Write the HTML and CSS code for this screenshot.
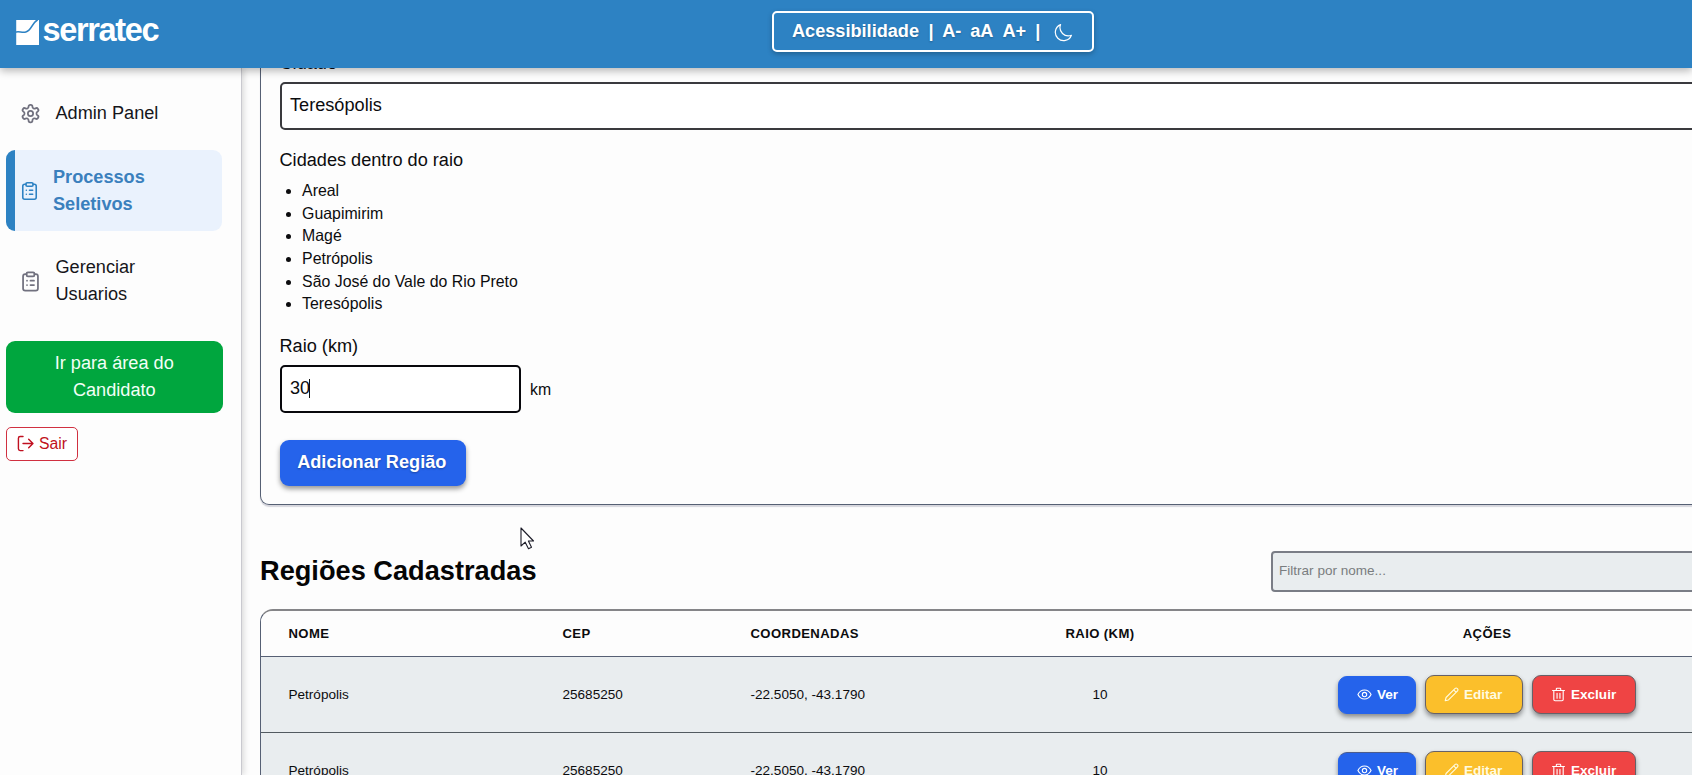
FILE: index.html
```html
<!DOCTYPE html>
<html lang="pt-BR">
<head>
<meta charset="utf-8">
<title>Serratec</title>
<link rel="stylesheet" href="styles.css">
</head>
<body>
<svg class="sprite" aria-hidden="true">
  <symbol id="clipboard" viewBox="0 0 24 24"><rect x="7.500" y="1.500" width="9" height="4.500" rx="1.500"/><path d="M16.500 3.500H18a2.500 2.500 0 0 1 2.500 2.500v14a2.500 2.500 0 0 1-2.500 2.500H6A2.500 2.500 0 0 1 3.500 20V6A2.500 2.500 0 0 1 6 3.500h1.500M12 11h4M12 16h4M8 11h.01M8 16h.01"/></symbol>
  <symbol id="eye" viewBox="0 0 24 24"><path d="M1.500 12S5 4.800 12 4.800 22.500 12 22.500 12 19 19.200 12 19.200 1.500 12 1.500 12z"/><circle cx="12" cy="12" r="3.500"/></symbol>
  <symbol id="pencil" viewBox="0 0 24 24"><path d="M2 22l1.300-5.200L17.500 2.600a2.700 2.700 0 0 1 3.900 3.900L7.200 20.700 2 22zM15.500 4.600l3.900 3.900"/></symbol>
  <symbol id="trash" viewBox="0 0 24 24"><path d="M2.500 5.500h19M8.500 5.500V3a1 1 0 0 1 1-1h5a1 1 0 0 1 1 1v2.500M4.500 5.500V20a2 2 0 0 0 2 2h11a2 2 0 0 0 2-2V5.500M9.700 10v8M14.300 10v8"/></symbol>
</svg>

<header class="topbar">
  <div class="logo">
    <svg class="logo-mark" viewBox="0 0 24 26"><path d="M0 0h24v26H0z" fill="#fff" stroke="none"/><path d="M0 12.500C3 11.500 6 13.500 10 12.500 16 11 16.500 3 22 0" fill="none" stroke="#2d82c3" stroke-width="1.700"/></svg>
    <span class="logo-name">serratec</span>
  </div>
  <div class="a11y">
    <span>Acessibilidade</span><span class="bar">|</span><span class="minus">A-</span><span class="reset">aA</span><span class="plus">A+</span><span class="bar last">|</span>
    <svg class="moon" viewBox="0 0 24 24"><path d="M22 15.500A10.500 10.500 0 0 1 8.300 2 10.500 10.500 0 1 0 22 15.500z"/></svg>
  </div>
</header>

<div class="layout">
  <aside class="sidebar">
    <a class="nav admin">
      <svg class="icon gear" viewBox="0 0 24 24"><path d="M12.220 2h-.44a2 2 0 0 0-2 2v.18a2 2 0 0 1-1 1.730l-.43.25a2 2 0 0 1-2 0l-.15-.08a2 2 0 0 0-2.730.73l-.22.38a2 2 0 0 0 .73 2.730l.15.1a2 2 0 0 1 1 1.720v.51a2 2 0 0 1-1 1.740l-.15.09a2 2 0 0 0-.73 2.730l.22.38a2 2 0 0 0 2.730.73l.15-.08a2 2 0 0 1 2 0l.43.25a2 2 0 0 1 1 1.730V20a2 2 0 0 0 2 2h.44a2 2 0 0 0 2-2v-.18a2 2 0 0 1 1-1.730l.43-.25a2 2 0 0 1 2 0l.15.08a2 2 0 0 0 2.730-.73l.22-.39a2 2 0 0 0-.73-2.730l-.15-.08a2 2 0 0 1-1-1.740v-.5a2 2 0 0 1 1-1.740l.15-.09a2 2 0 0 0 .73-2.730l-.22-.38a2 2 0 0 0-2.730-.73l-.15.08a2 2 0 0 1-2 0l-.43-.25a2 2 0 0 1-1-1.730V4a2 2 0 0 0-2-2z"/><circle cx="12" cy="12" r="3"/></svg>
      <span>Admin Panel</span>
    </a>
    <a class="nav active">
      <svg class="icon"><use href="#clipboard"/></svg>
      <span>Processos<br>Seletivos</span>
    </a>
    <a class="nav users">
      <svg class="icon"><use href="#clipboard"/></svg>
      <span>Gerenciar<br>Usuarios</span>
    </a>
    <button class="candidate">Ir para área do<br>Candidato</button>
    <button class="logout">
      <svg viewBox="0 0 24 24"><path d="M8.500 22H4.500A2.500 2.500 0 0 1 2 19.500v-15A2.500 2.500 0 0 1 4.500 2H8.500M8.500 12H22M16.500 6l6 6-6 6"/></svg>
      <span>Sair</span>
    </button>
  </aside>

  <main class="content">
    <section class="card">
      <label class="label city-label">Cidade</label>
      <div class="field city">Teresópolis</div>
      <p class="label radius-cities">Cidades dentro do raio</p>
      <ul class="cities">
        <li>Areal</li><li>Guapimirim</li><li>Magé</li><li>Petrópolis</li><li>São José do Vale do Rio Preto</li><li>Teresópolis</li>
      </ul>
      <label class="label radius-label">Raio (km)</label>
      <div class="radius-row"><div class="field radius">30<i class="caret"></i></div><span>km</span></div>
      <button class="add">Adicionar Região</button>
    </section>

    <div class="section-head">
      <h2>Regiões Cadastradas</h2>
      <div class="filter">Filtrar por nome...</div>
    </div>

    <div class="table">
      <div class="row head"><span>NOME</span><span>CEP</span><span>COORDENADAS</span><span class="center">RAIO (KM)</span><span class="center">AÇÕES</span></div>
      <div class="row">
        <span>Petrópolis</span><span>25685250</span><span>-22.5050, -43.1790</span><span class="center">10</span>
        <div class="actions">
          <button class="btn view"><svg><use href="#eye"/></svg>Ver</button>
          <button class="btn edit"><svg><use href="#pencil"/></svg>Editar</button>
          <button class="btn delete"><svg><use href="#trash"/></svg>Excluir</button>
        </div>
      </div>
      <div class="row">
        <span>Petrópolis</span><span>25685250</span><span>-22.5050, -43.1790</span><span class="center">10</span>
        <div class="actions">
          <button class="btn view second"><svg><use href="#eye"/></svg>Ver</button>
          <button class="btn edit"><svg><use href="#pencil"/></svg>Editar</button>
          <button class="btn delete"><svg><use href="#trash"/></svg>Excluir</button>
        </div>
      </div>
    </div>
  </main>
</div>

<svg class="cursor" viewBox="0 0 15 23"><path d="M1 1v18l4.200-3.800 3.300 6.500 3-1.400-3.100-6.300H13.500z" fill="#fff" stroke="#1c1c28" stroke-width="1.100"/></svg>
</body>
</html>
```

FILE: styles.css
```css
* { box-sizing: border-box; }

body {
  margin: 0;
  height: 775px;
  overflow: hidden;
  background: #fdfdfd;
  color: #0c0c0e;
  font: 18.15px/27px "Liberation Sans", Arial, sans-serif;
}

button { font: inherit; margin: 0; border: 0; }
svg { fill: none; stroke: currentColor; stroke-width: 2; stroke-linecap: round; stroke-linejoin: round; flex: none; }
.sprite { display: none; }

.topbar {
  position: relative;
  z-index: 2;
  height: 68px;
  background: #2d82c3;
  box-shadow: 0 3px 8px rgba(0, 0, 0, .28);
  color: #fff;
  display: flex;
  align-items: flex-start;
}
.logo { display: flex; align-items: flex-start; width: 772px; padding: 12px 0 0 15.500px; }
.logo-mark { width: 23.500px; height: 25px; margin-top: 8px; }
.logo-name { font-size: 32.500px; line-height: 36px; font-weight: bold; letter-spacing: -1.350px; margin-left: 3.500px; }

.a11y {
  display: flex;
  align-items: center;
  width: 322px;
  height: 41px;
  margin-top: 11px;
  padding-left: 18px;
  border: 2px solid #fff;
  border-radius: 5px;
  box-shadow: 0 2px 5px rgba(0, 0, 0, .25);
  font-weight: bold;
  text-shadow: 0 1px 2px rgba(0, 0, 0, .25);
}
.bar { margin-left: 9.500px; }
.last { margin-left: 9px; }
.minus { margin-left: 8.500px; }
.reset, .plus { margin-left: 9px; }
.moon { width: 19px; height: 19px; margin-left: 14px; margin-top: 2px; stroke-width: 1.500; }

.layout { display: flex; height: 707px; }

.sidebar {
  flex: none;
  width: 242px;
  height: 707px;
  padding: 32px 19px 0 6px;
  border-right: 1px solid #c9c9cf;
  box-shadow: 2px 0 6px rgba(0, 0, 0, .14);
}
.nav { display: flex; align-items: center; color: #16161a; }
.icon { width: 21px; height: 21px; color: #71717f; }
.admin { padding-left: 14px; }
.admin span { margin-left: 14.500px; }
.active {
  height: 81px;
  margin-top: 23px;
  padding-left: 4.500px;
  border-left: 9px solid #2d82c3;
  border-radius: 9px;
  background: #eaf2fd;
  color: #3a80bd;
  font-weight: bold;
}
.active .icon { width: 19px; height: 20px; color: #2d82c3; }
.active span { margin-left: 14.500px; }
.users { margin-top: 23px; padding-left: 14px; }
.users span { margin-left: 14.500px; }
.candidate {
  display: block;
  width: 216.500px;
  height: 72px;
  margin-top: 32.500px;
  padding: 0;
  border-radius: 9px;
  background: #00a63e;
  color: #f3fff7;
}
.logout {
  display: flex;
  align-items: center;
  width: 71.500px;
  height: 34px;
  margin-top: 14px;
  padding: 0 0 0 10px;
  border: 1px solid #d03040;
  border-radius: 5px;
  background: #fff;
  color: #c01020;
  font-size: 15.800px;
}
.logout svg { width: 17px; height: 17px; }
.logout span { margin-left: 5px; }

.content { flex: none; width: 1461px; margin-top: -20px; padding-left: 18px; }
.card {
  width: 1500px;
  height: 457px;
  padding: 3px 18.500px 0;
  border: 1.500px solid #566074;
  border-top: 0;
  border-radius: 0 0 9px 9px;
  box-shadow: 0 2px 1px rgba(40, 40, 80, .18);
}
.label { display: block; margin: 0; }
.city-label { height: 31px; margin-top: -1px; padding-top: 0; margin-bottom: 1px; }
.field { height: 48px; border: 2px solid #3a3a3e; border-radius: 5px; background: #fff; padding-left: 8.500px; display: flex; align-items: center; }
.city { padding-bottom: 2px; }
.radius-cities { margin-top: 17px; }
.cities { margin: 6px 0 0; padding-left: 22.600px; font-size: 15.870px; line-height: 22.680px; list-style: disc; }
.radius-label { margin-top: 17px; }
.radius-row { display: flex; align-items: center; margin-top: 5px; font-size: 15.800px; }
.radius-row > span { margin-left: 9px; }
.radius { width: 241.500px; height: 48px; border: 2px solid #08080c; padding-left: 8.500px; padding-bottom: 1px; font-size: 18.100px; }
.caret { width: 1px; height: 19px; background: #111; margin-left: -1px; }
.add {
  width: 186.500px;
  height: 46px;
  margin-top: 27px;
  padding: 0 2px 1px 0;
  border-radius: 9px;
  background: #2563eb;
  box-shadow: 0 3px 5px rgba(0, 0, 0, .4);
  color: #fff;
  font-weight: bold;
  text-shadow: 0 1px 2px rgba(0, 0, 0, .3);
}

.section-head { display: flex; align-items: flex-start; justify-content: space-between; margin-top: 46px; }
h2 { margin: 2px 0 0; font-size: 27.200px; line-height: 36px; color: #050505; }
.filter { width: 432px; height: 41px; padding-left: 6px; border: 2px solid #7a7d86; border-radius: 4px; background: #e9edef; color: #7a7d80; font-size: 13.560px; line-height: 35px; }

.table { height: 240px; margin-top: 17px; border: 1.500px solid #566074; border-top: 2px solid #858588; border-radius: 13px 13px 0 0; overflow: hidden; font-size: 13.560px; }
.row {
  display: grid;
  grid-template-columns: 274px 188px 206px 342px 432px;
  align-items: center;
  height: 76px;
  border-bottom: 1px solid #525a60;
  background: #e9edef;
}
.row > span { padding-left: 27.500px; }
.row > .center { padding: 0; text-align: center; }
.row.head { height: 46px; padding-bottom: 1px; background: #fdfdfd; border-bottom-color: #566074; font-weight: bold; font-size: 13.100px; letter-spacing: .4px; }
.actions { display: flex; justify-content: center; align-items: center; gap: 9px; }
.btn {
  display: flex;
  align-items: center;
  height: 39px;
  padding: 0 0 0 18px;
  border: 1.500px solid #666168;
  border-radius: 9px;
  box-shadow: 0 3px 5px rgba(0, 0, 0, .42);
  color: #fff;
  font-weight: bold;
}
.btn svg { width: 15px; height: 15px; stroke-width: 1.800; margin-right: 5px; }
.view { width: 78px; height: 38px; border-color: #2563eb; background: #2563eb; }
.second { border-top-color: #4c5c8c; }
.edit { width: 98px; background: #fbbf2b; color: #fffbe0; }
.delete { width: 104px; background: #ef4444; }

.cursor { position: absolute; left: 520px; top: 527px; width: 15px; height: 23px; z-index: 3; }
```
